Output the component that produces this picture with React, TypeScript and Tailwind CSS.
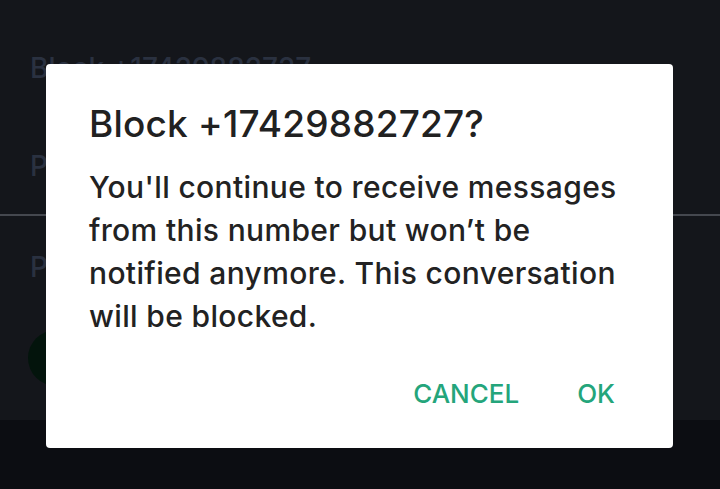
export default function App() {
  return (
    <div className="relative h-[489px] w-[720px] overflow-hidden bg-[#121419] font-['Inter',sans-serif]">
      {/* dimmed screen behind the dialog */}
      <div className="flex h-[420px] flex-col bg-[#14161b]">
        <div className="h-[50px]" />
        <div className="px-[30px] text-[28px] font-medium leading-[36px] text-[#2a3140]">
          Block +17429882727
        </div>
        <div className="mt-[62px] px-[30px] text-[28px] font-medium leading-[36px] text-[#2a3140]">
          P
        </div>
        <div className="mt-[30px] h-[2px] bg-[#45484f]" />
        <div className="mt-[33px] px-[30px] text-[28px] font-medium leading-[36px] text-[#2a3140]">
          P
        </div>
        <div className="ml-[28px] mt-[45px] h-[56px] w-[56px] rounded-full bg-[#03140c]" />
      </div>
      <div className="h-[69px] bg-[#0c0d12]" />

      <div
        role="dialog"
        className="absolute left-[46px] top-[64px] flex h-[384px] w-[627px] flex-col rounded-[4px] bg-white px-[43px] pt-[36px]"
      >
        <h2 className="text-[37px] font-medium leading-[48px] tracking-[0.2px] text-[#212121]">
          Block +17429882727?
        </h2>
        <p className="mt-[18px] text-[30px] font-medium leading-[43px] tracking-[0.35px] text-[#222222]">
          You'll continue to receive messages from this number but won’t be notified anymore. This conversation will be blocked.
        </p>
        <div className="mt-[36px] flex justify-end gap-[58px] pr-[15px]">
          <button className="text-[26px] font-medium uppercase text-[#24a57b]">Cancel</button>
          <button className="text-[26px] font-medium uppercase text-[#24a57b]">OK</button>
        </div>
      </div>
    </div>
  )
}
